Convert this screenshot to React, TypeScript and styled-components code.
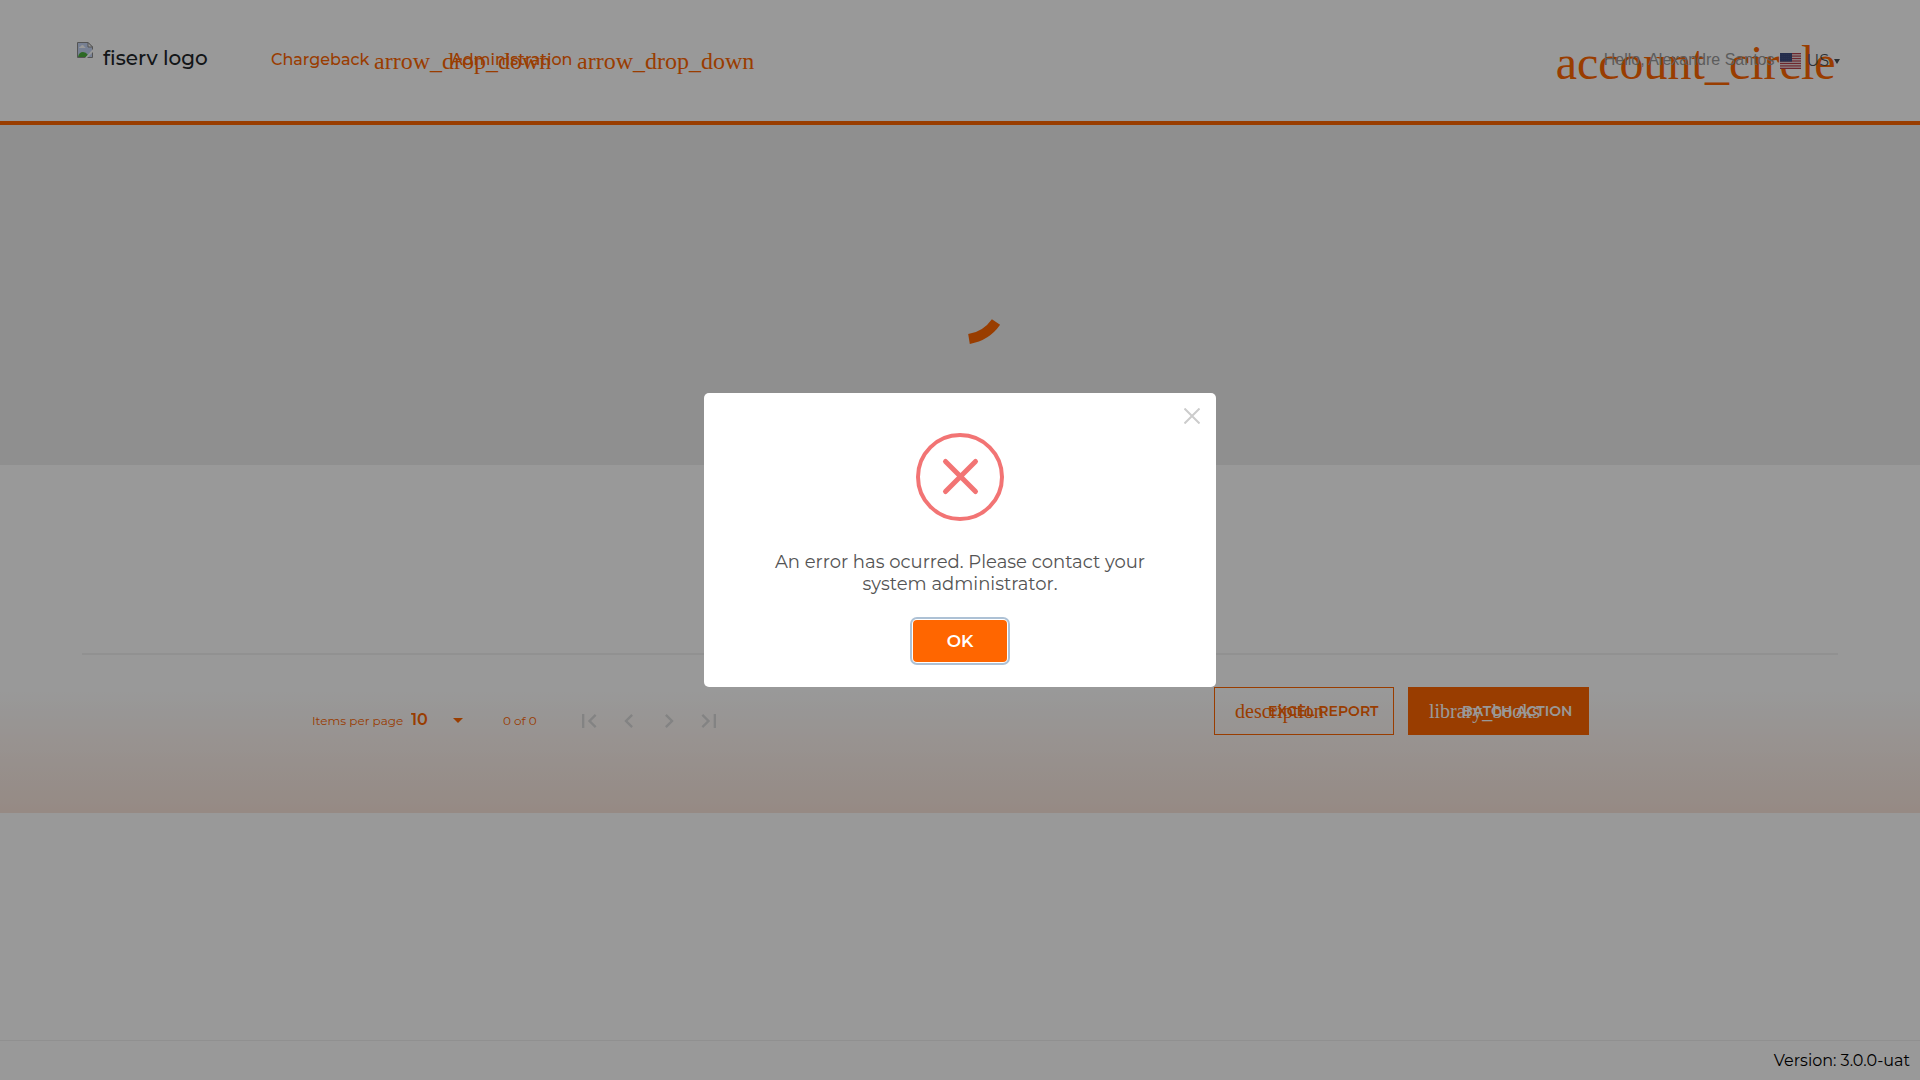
import React from "react";
import styled, { createGlobalStyle } from "styled-components";

const ORANGE = "#ff6600";
const SANS = `Montserrat, Inter, "Open Sans", sans-serif`;
const SERIF = `"Liberation Serif", "Times New Roman", serif`;

const GlobalStyle = createGlobalStyle`
  *, *::before, *::after { box-sizing: border-box; }
  body { margin: 0; background: #fff; color: #212529; font-family: ${SANS}; }
  button, select { font-family: inherit; margin: 0; }
`;

const Page = styled.div`
  display: flex;
  flex-direction: column;
  min-height: 100vh;
`;

const Header = styled.header`
  display: flex;
  justify-content: space-between;
  align-items: flex-start;
  height: 125px;
  padding: 42px 80px 0 77px;
  border-bottom: 4px solid ${ORANGE};
`;

const HeaderLeft = styled.div`
  display: flex;
`;

const Brand = styled.a`
  display: flex;
  gap: 10px;
  width: 194px;
  color: #212529;
  text-decoration: none;
  font-size: 20px;
  font-weight: 500;
  font-variant-ligatures: none;
  line-height: 32px;
`;

const Nav = styled.nav`
  display: flex;
  gap: 53px;
`;

const NavButton = styled.button`
  display: flex;
  align-items: center;
  gap: 3px;
  height: 34px;
  padding: 0;
  border: 0;
  background: none;
  color: ${ORANGE};
  font-size: 16px;
  font-weight: 500;
  white-space: nowrap;
`;

const Ligature = styled.i<{ $size: number; $box: number; $drop?: number }>`
  display: block;
  flex: none;
  width: ${(p) => p.$box}px;
  padding-top: ${(p) => p.$drop ?? 0}px;
  font-family: ${SERIF};
  font-size: ${(p) => p.$size}px;
  font-style: normal;
  font-weight: 400;
  line-height: 1;
  text-align: left;
  white-space: nowrap;
`;

const NavLabel = styled.span<{ $width: number }>`
  width: ${(p) => p.$width}px;
  text-align: left;
`;

const Account = styled.div`
  display: flex;
  align-items: center;
  height: 36px;
  color: ${ORANGE};
`;

const Greeting = styled.span`
  margin-right: 6px;
  color: #999;
  font-family: "Liberation Sans", Arial, sans-serif;
  font-size: 16px;
`;

const Language = styled.button`
  display: flex;
  align-items: center;
  gap: 5px;
  padding: 2px 0 0;
  border: 0;
  background: none;
  color: #495057;
  font-size: 16px;
  line-height: 20px;
`;

const Search = styled.section`
  display: flex;
  justify-content: center;
  align-items: flex-start;
  height: 340px;
  padding-top: 124px;
  background: #eee;
`;

const Results = styled.main`
  display: flex;
  flex-direction: column;
  height: 348px;
  padding: 188px 82px 0;
  background: linear-gradient(to bottom, #fff 65%, #fae6dc 100%);
`;

const Divider = styled.hr`
  width: 100%;
  height: 2px;
  margin: 0 0 32px;
  border: 0;
  background: #f2f2f2;
`;

const Toolbar = styled.div`
  display: flex;
  justify-content: space-between;
  width: 100%;
  max-width: 1277px;
  margin: 0 auto;
`;

const ToolbarArea = styled.div`
  padding-right: 19px;
`;

const Paginator = styled.div`
  display: flex;
  align-items: center;
  height: 66px;
  color: ${ORANGE};
  font-size: 12px;
`;

const PageSize = styled.label`
  display: flex;
  align-items: center;
  width: 191px;
  gap: 8px;
`;

const PageSizeText = styled.span`
  width: 91px;
  white-space: nowrap;
`;

const SelectWrap = styled.span`
  display: flex;
  align-items: center;
`;

const Select = styled.select`
  appearance: none;
  width: 42px;
  padding: 0;
  border: 0;
  background: none;
  color: ${ORANGE};
  font-size: 16px;
  font-weight: 600;
  line-height: 20px;
`;

const Range = styled.span`
  width: 66px;
`;

const PageButton = styled.button`
  display: flex;
  align-items: center;
  justify-content: center;
  width: 40px;
  height: 40px;
  padding: 2px 0 0;
  border: 0;
  background: none;
`;

const Actions = styled.div`
  display: flex;
  gap: 14px;
`;

const ActionButton = styled.button<{ $filled?: boolean }>`
  display: flex;
  align-items: center;
  width: ${(p) => (p.$filled ? 181 : 180)}px;
  height: 48px;
  padding: 0 14px 0 20px;
  gap: 9px;
  border: 1px solid ${ORANGE};
  background: ${(p) => (p.$filled ? ORANGE : "transparent")};
  color: ${(p) => (p.$filled ? "#fff" : ORANGE)};
  font-size: 14px;
  font-weight: 600;
  line-height: 20px;
  white-space: nowrap;
`;

const Footer = styled.footer`
  display: flex;
  align-items: center;
  justify-content: flex-end;
  height: 40px;
  margin-top: auto;
  padding-right: 10px;
  border-top: 1px solid #f0f0f0;
  color: #000;
  font-size: 16px;
`;

const Overlay = styled.div`
  position: fixed;
  inset: 0;
  display: flex;
  align-items: center;
  justify-content: center;
  background: rgba(0, 0, 0, 0.4);
`;

const Dialog = styled.div`
  position: relative;
  display: flex;
  flex-direction: column;
  align-items: center;
  width: 512px;
  max-width: 100%;
  padding: 40px 36px 25px;
  border-radius: 5px;
  background: #fff;
`;

const CloseButton = styled.button`
  position: absolute;
  top: 5px;
  right: 6px;
  display: flex;
  align-items: center;
  justify-content: center;
  width: 36px;
  height: 36px;
  padding: 0;
  border: 0;
  background: none;
`;

const Message = styled.p`
  margin: 30px 0 25px;
  padding: 0 30px;
  color: #545454;
  font-size: 18px;
  font-weight: 400;
  line-height: 22px;
  text-align: center;
`;

const OkButton = styled.button`
  width: 94px;
  height: 42px;
  border: 0;
  border-radius: 4px;
  background: ${ORANGE};
  color: #fff;
  font-size: 17px;
  font-weight: 600;
  outline: none;
  box-shadow: 0 0 0 1px #fff, 0 0 0 3px rgba(50, 100, 150, 0.4);
`;

function BrokenImage() {
  return (
    <svg width="16" height="16" viewBox="0 0 16 16" aria-hidden="true">
      <path d="M.5.5H11L15.5 5v10.5H.5z" fill="#c6d6f5" stroke="#8d8d8d" />
      <path d="M11 .5V5h4.5z" fill="#fff" stroke="#8d8d8d" />
      <path d="M2 6q0-1.500 1.500-1.500Q4 3 5.500 3T7 4.500Q8.500 4.500 8.500 6z" fill="#fff" />
      <path d="M1 15q1-5 5-5 3 0 5 3l-2 2z" fill="#4caf3f" />
      <path d="M16 7v3l-6 6H8z" fill="#fff" />
    </svg>
  );
}

function Flag() {
  return (
    <svg width="21" height="16" viewBox="0 0 21 16" aria-hidden="true">
      <rect width="21" height="16" fill="#f0e8ea" />
      {[0, 1, 2, 3, 4, 5, 6].map((i) => (
        <rect key={i} y={i * 2.46} width="21" height="1.230" fill="#b8414c" />
      ))}
      <rect width="12" height="8.600" fill="#3c4a7e" />
      {[1, 3, 5, 7].map((y) =>
        [1, 3, 5, 7, 9, 11].map((x) => (
          <rect key={`${x}-${y}`} x={x - 0.3} y={y} width=".4" height=".4" fill="#8b93b5" />
        ))
      )}
    </svg>
  );
}

function Caret({ width, height }: { width: number; height: number }) {
  return (
    <svg width={width} height={height} viewBox="0 0 10 5" preserveAspectRatio="none" aria-hidden="true">
      <path d="M0 0h10L5 5z" fill="currentColor" />
    </svg>
  );
}

const pageButtons = [
  { label: "First page", d: "M18.410 16.590 13.820 12l4.590-4.590L17 6l-6 6 6 6zM6 6h2v12H6z" },
  { label: "Previous page", d: "M15.410 7.410 14 6l-6 6 6 6 1.410-1.410L10.830 12z" },
  { label: "Next page", d: "M10 6 8.590 7.410 13.170 12l-4.580 4.590L10 18l6-6z" },
  { label: "Last page", d: "M5.590 7.410 10.180 12l-4.590 4.590L7 18l6-6-6-6zM16 6h2v12h-2z" },
];

const menus = [
  { label: "Chargeback", width: 100 },
  { label: "Administration", width: 123 },
];

export default function App() {
  return (
    <>
      <GlobalStyle />
      <Page>
        <Header>
          <HeaderLeft>
            <Brand href="#">
              <BrokenImage />
              fiserv logo
            </Brand>
            <Nav>
              {menus.map((m) => (
                <NavButton key={m.label}>
                  <NavLabel $width={m.width}>{m.label}</NavLabel>
                  <Ligature $size={24} $box={24} $drop={4}>arrow_drop_down</Ligature>
                </NavButton>
              ))}
            </Nav>
          </HeaderLeft>
          <Account>
            <Ligature $size={48} $box={48} $drop={6}>account_circle</Ligature>
            <Greeting>Hello, Alexandre Santos</Greeting>
            <Language>
              <Flag />
              US
              <Caret width={6} height={5} />
            </Language>
          </Account>
        </Header>
        <Search>
          <svg width="100" height="100" viewBox="0 0 100 100" role="img" aria-label="Loading">
            <path d="M59 90A41 41 0 0 0 86 73" fill="none" stroke={ORANGE} strokeWidth="10" />
          </svg>
        </Search>
        <Results>
          <Divider />
          <ToolbarArea>
            <Toolbar>
              <Paginator>
                <PageSize>
                  <PageSizeText>Items per page</PageSizeText>
                  <SelectWrap>
                    <Select defaultValue="10">
                      <option>10</option>
                      <option>25</option>
                      <option>50</option>
                    </Select>
                    <Caret width={10} height={5} />
                  </SelectWrap>
                </PageSize>
                <Range>0 of 0</Range>
                {pageButtons.map((b) => (
                  <PageButton key={b.label} aria-label={b.label}>
                    <svg width="28" height="28" viewBox="0 0 24 24" aria-hidden="true">
                      <path d={b.d} fill="#dadada" />
                    </svg>
                  </PageButton>
                ))}
              </Paginator>
              <Actions>
                <ActionButton>
                  <Ligature $size={20} $box={24}>description</Ligature>
                  EXCEL REPORT
                </ActionButton>
                <ActionButton $filled>
                  <Ligature $size={20} $box={24}>library_books</Ligature>
                  BATCH ACTION
                </ActionButton>
              </Actions>
            </Toolbar>
          </ToolbarArea>
        </Results>
        <Footer>Version: 3.0.0-uat</Footer>
      </Page>
      <Overlay>
        <Dialog role="dialog" aria-modal="true">
          <CloseButton aria-label="Close">
            <svg width="16" height="16" viewBox="0 0 16 16" aria-hidden="true">
              <path d="M.5.5l15 15M15.500.5l-15 15" stroke="#ccc" strokeWidth="2" />
            </svg>
          </CloseButton>
          <svg width="88" height="88" viewBox="0 0 88 88" aria-hidden="true">
            <circle cx="44" cy="44" r="42" fill="none" stroke="#f27474" strokeWidth="4" />
            <path d="M29.500 28.500l30 30M59.500 28.500l-30 30" stroke="#f27474" strokeWidth="5" strokeLinecap="round" />
          </svg>
          <Message>An error has ocurred. Please contact your system administrator.</Message>
          <OkButton>OK</OkButton>
        </Dialog>
      </Overlay>
    </>
  );
}
